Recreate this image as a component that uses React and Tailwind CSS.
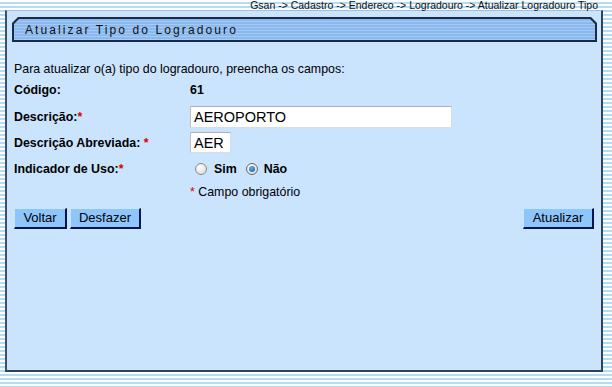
export default function App() {
  const font = { fontFamily: '"Liberation Sans", Arial, sans-serif' };
  return (
    <div
      className="w-[612px] h-[387px] overflow-hidden text-black bg-[repeating-linear-gradient(180deg,#ffffff_0px,#ffffff_2px,#b4dcf4_2px,#b4dcf4_4px)]"
      style={font}
    >
      <div className="h-[10px] flex justify-end pr-[14px] text-[10.5px] leading-[10px] text-[#111]">
        Gsan -&gt; Cadastro -&gt; Endereco -&gt; Logradouro -&gt; Atualizar Logradouro Tipo
      </div>
      <div className="ml-[5px] w-[598px] h-[362px] bg-[#cbe4fd] border-t border-t-[#9fbfdc] border-l-2 border-r-2 border-b-2 border-l-[#3b5068] border-r-[#2e4258] border-b-[#2e4258] flex flex-col">
        <div className="ml-[5px] mt-[6px] w-[585px] h-[25px] bg-[#1b2a44] [clip-path:polygon(6px_0,calc(100%-6px)_0,100%_6px,100%_100%,0_100%,0_6px)] p-[2px]">
          <div className="w-full h-full bg-[repeating-linear-gradient(180deg,#8bb9ee_0px,#8bb9ee_2px,#a3cbf7_2px,#a3cbf7_3px)] [clip-path:polygon(5px_0,calc(100%-5px)_0,100%_5px,100%_100%,0_100%,0_5px)] flex items-center pl-[11px] text-[12px] tracking-[2.1px] text-[#111]">
            Atualizar Tipo do Logradouro
          </div>
        </div>
        <div className="pl-[7px] pr-[7px] flex flex-col text-[12.4px] leading-[14px]">
          <div className="mt-[20px] h-[14px]">Para atualizar o(a) tipo do logradouro, preencha os campos:</div>
          <div className="mt-[7px] h-[14px] flex font-bold">
            <div className="w-[176px]">Código:</div>
            <div>61</div>
          </div>
          <div className="mt-[9px] h-[22px] flex items-center">
            <div className="w-[176px] font-bold">Descrição:<span className="text-[#e00000]">*</span></div>
            <div className="w-[262px] h-[22px] bg-white border border-[#d6dde5] border-t-[#b0b0b0] border-l-[#c0c0c0] flex items-center pl-[3px] text-[14.5px]">AEROPORTO</div>
          </div>
          <div className="mt-[4px] h-[21px] flex items-center">
            <div className="w-[176px] font-bold">Descrição Abreviada: <span className="text-[#e00000]">*</span></div>
            <div className="w-[41px] h-[21px] bg-white border border-[#d6dde5] border-t-[#b0b0b0] border-l-[#c0c0c0] flex items-center pl-[3px] text-[14.5px]">AER</div>
          </div>
          <div className="mt-[9px] h-[14px] flex items-center">
            <div className="w-[176px] font-bold">Indicador de Uso:<span className="text-[#e00000]">*</span></div>
            <div className="flex items-center font-bold">
              <span className="ml-[5px] w-[12px] h-[12px] rounded-full border border-[#8a8a8a] bg-[radial-gradient(circle_at_40%_35%,#ffffff,#d4d4d4)]"></span>
              <span className="ml-[7px]">Sim</span>
              <span className="ml-[9px] w-[12px] h-[12px] rounded-full border border-[#6a6a6a] bg-[radial-gradient(circle_at_40%_35%,#ffffff,#d4d4d4)] flex items-center justify-center">
                <span className="w-[6px] h-[6px] rounded-full bg-[radial-gradient(circle_at_40%_35%,#5ab0e8,#1a5a90)]"></span>
              </span>
              <span className="ml-[6px]">Não</span>
            </div>
          </div>
          <div className="mt-[9px] h-[14px] pl-[176px]"><span className="text-[#e00000]">*</span> Campo obrigatório</div>
          <div className="mt-[9px] flex items-center">
            <button className="w-[53px] h-[21px] bg-[#8ec5fb] border border-[#c8e4ff] border-r-2 border-b-2 border-r-[#0a1450] border-b-[#0a1450] text-[13px] leading-[16px]">Voltar</button>
            <button className="ml-[3px] w-[71px] h-[21px] bg-[#8ec5fb] border border-[#c8e4ff] border-r-2 border-b-2 border-r-[#0a1450] border-b-[#0a1450] text-[13px] leading-[16px]">Desfazer</button>
            <div className="flex-1"></div>
            <button className="w-[71px] h-[21px] bg-[#8ec5fb] border border-[#c8e4ff] border-r-2 border-b-2 border-r-[#0a1450] border-b-[#0a1450] text-[13px] leading-[16px]">Atualizar</button>
          </div>
        </div>
      </div>
    </div>
  );
}
